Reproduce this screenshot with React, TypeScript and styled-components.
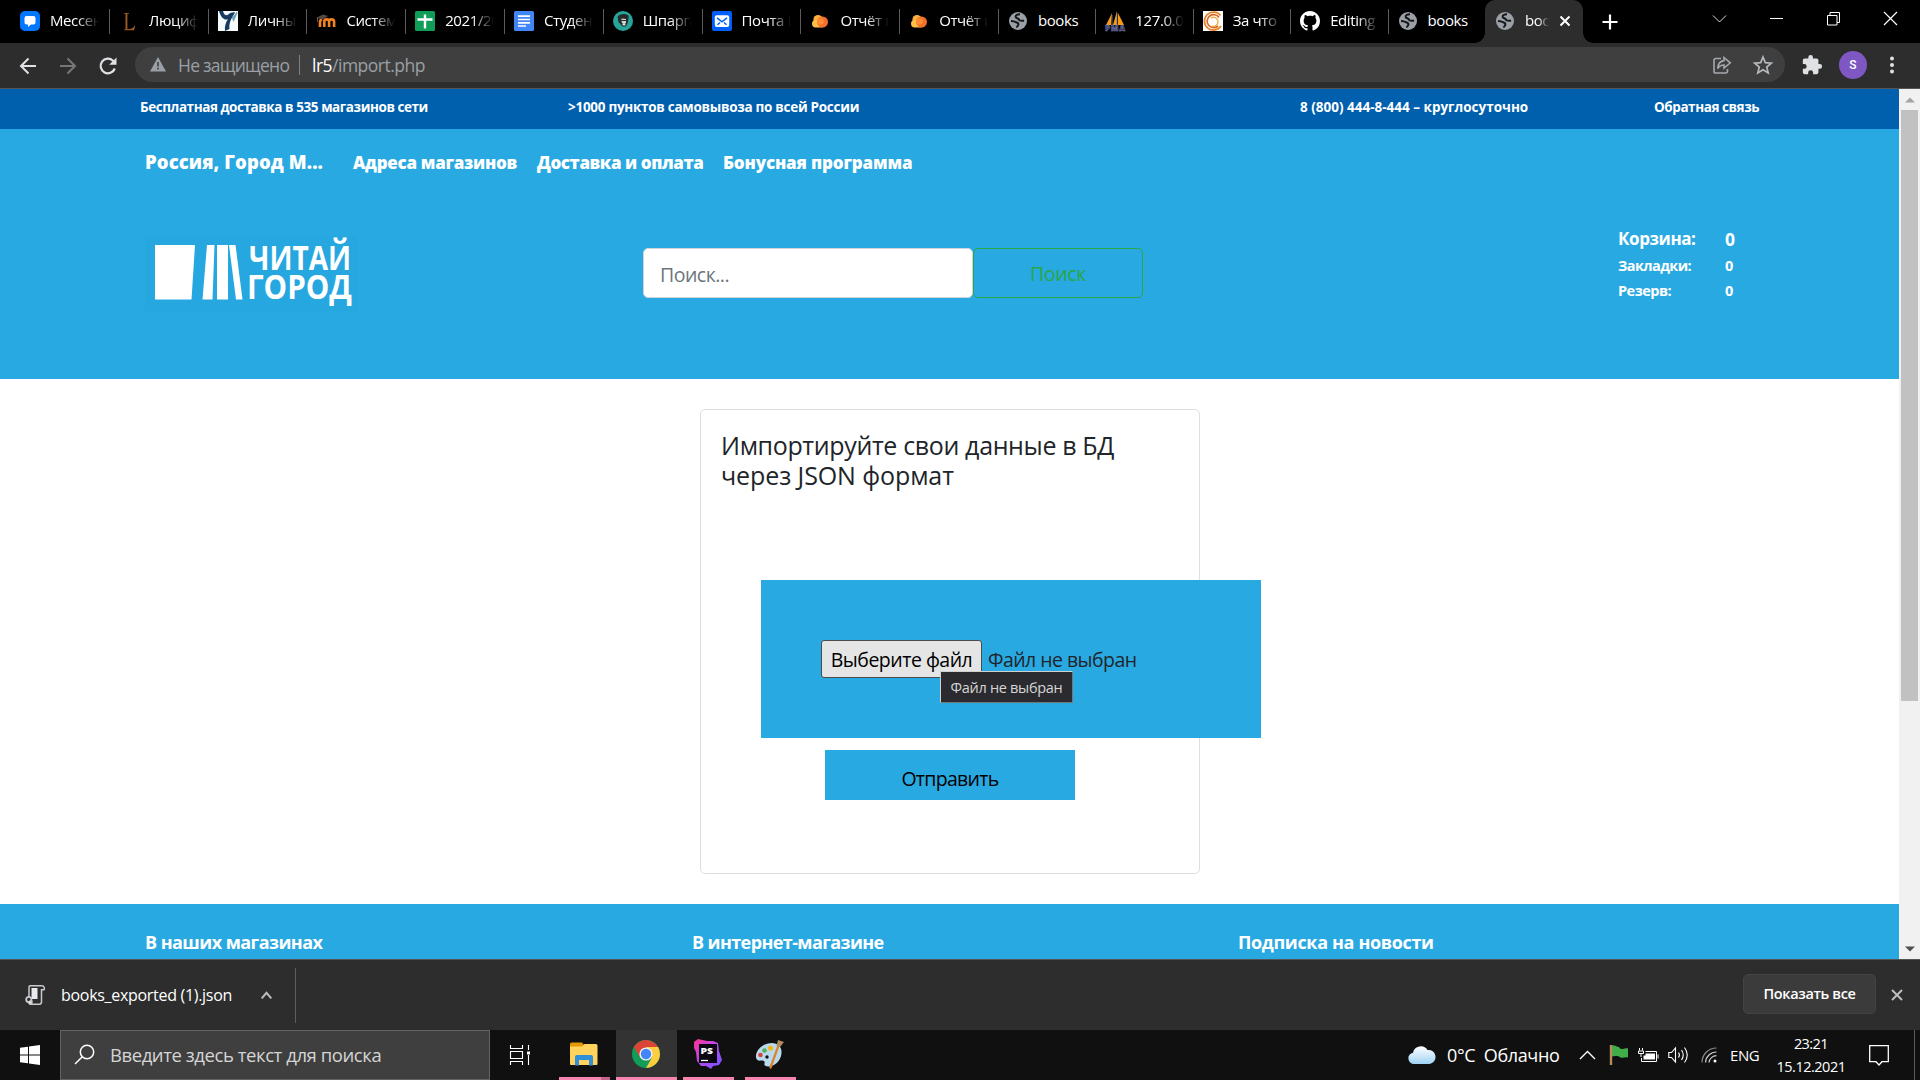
import React from "react";
import styled, { createGlobalStyle } from "styled-components";

const Global = createGlobalStyle`
  * { box-sizing: border-box; }
  html, body { margin: 0; padding: 0; overflow: hidden; }
  body { font-family: "Open Sans", "Noto Sans", sans-serif; background: #fff; }
  svg { display: block; flex: none; overflow: visible; }
`;

const Screen = styled.div`
  width: 1920px;
  height: 1080px;
  display: flex;
  flex-direction: column;
  overflow: hidden;
`;

const Label = styled.span<{ $size: number; $weight?: number; $spacing?: number; $color?: string }>`
  font-size: ${(p) => p.$size}px;
  font-weight: ${(p) => p.$weight ?? 400};
  letter-spacing: ${(p) => p.$spacing ?? 0}px;
  color: ${(p) => p.$color ?? "inherit"};
  white-space: pre;
`;

/* Browser tab strip */
const TabStrip = styled.div`
  height: 43px;
  background: #000;
  color: #fff;
  display: flex;
  padding-left: 10px;
`;
const Tab = styled.div<{ $active?: boolean; $line?: boolean; $width: number }>`
  width: ${(p) => p.$width}px;
  flex: none;
  height: 43px;
  display: flex;
  align-items: center;
  padding: 0 10px 1px;
  gap: 10px;
  position: relative;
  border-radius: ${(p) => (p.$active ? "10px 10px 0 0" : "0")};
  background: ${(p) => (p.$active ? "#2d2d2d" : "transparent")};
  &::after {
    content: "";
    display: ${(p) => (p.$line ? "block" : "none")};
    position: absolute;
    right: -1px;
    top: 9px;
    width: 1px;
    height: 25px;
    background: #5a5a5a;
  }
`;
const TabTitle = styled.div<{ $fade?: boolean; $width: number }>`
  width: ${(p) => p.$width}px;
  flex: none;
  overflow: hidden;
  font-size: 15px;
  line-height: 24px;
  padding-bottom: 3px;
  white-space: pre;
  letter-spacing: -0.4px;
  mask-image: ${(p) => (p.$fade ? "linear-gradient(90deg, #000 55%, transparent)" : "none")};
`;
const TabFoot = styled.i<{ $side: "left" | "right" }>`
  position: absolute;
  bottom: 0;
  ${(p) => p.$side}: -10px;
  width: 10px;
  height: 10px;
  background: radial-gradient(circle at ${(p) => (p.$side === "left" ? "0 0" : "100% 0")}, transparent 9.5px, #2d2d2d 10px);
`;
const NewTab = styled.div`
  padding: 14px 0 0 19px;
`;
const WindowButtons = styled.div`
  margin-left: auto;
  display: flex;
  padding: 11px 22px 0 0;
  gap: 42px;
`;

/* Address bar */
const Toolbar = styled.div`
  height: 46px;
  background: #2d2d2d;
  border-bottom: 1px solid #545454;
  display: flex;
  align-items: center;
  padding: 0 24px 0 18px;
`;
const NavButtons = styled.div`
  display: flex;
  width: 117px;
  gap: 20px;
`;
const Omnibox = styled.div`
  width: 1650px;
  height: 35px;
  margin-top: -2px;
  border-radius: 18px;
  background: #3f3f3f;
  display: flex;
  align-items: center;
  padding: 0 12px 0 15px;
  color: #9aa0a6;
`;
const Divider = styled.i<{ $height: number; $color: string }>`
  width: 1px;
  height: ${(p) => p.$height}px;
  background: ${(p) => p.$color};
`;
const Security = styled.div`
  width: 133px;
  padding-left: 12px;
`;
const Address = styled.div`
  padding-left: 12px;
`;
const OmniActions = styled.div`
  margin-left: auto;
  display: flex;
  gap: 21px;
`;
const ToolActions = styled.div`
  margin: -2px 0 0 auto;
  display: flex;
  align-items: center;
`;
const Avatar = styled.div`
  width: 28px;
  height: 28px;
  margin: 0 21px 0 16px;
  border-radius: 50%;
  background: #7e57c2;
  color: #fff;
  font: 500 12px/28px Roboto, sans-serif;
  text-align: center;
`;

/* Page */
const Viewport = styled.div`
  height: 870px;
  display: flex;
  overflow: hidden;
`;
const Page = styled.div`
  width: 1899px;
`;
const Scrollbar = styled.div`
  width: 21px;
  background: #f1f1f1;
  display: flex;
  flex-direction: column;
  align-items: center;
`;
const ScrollArrow = styled.div`
  height: 21px;
  padding-top: 8px;
`;
const Thumb = styled.div`
  width: 17px;
  height: 591px;
  background: #c1c1c1;
  margin-bottom: auto;
`;
const TopBar = styled.div`
  height: 40px;
  padding: 6px 0 0 140px;
  background: #0060ae;
  color: #fff;
  display: grid;
  grid-template-columns: 428px 732px 354px auto;
  line-height: 24px;
`;
const Header = styled.header`
  height: 250px;
  background: #29a9e2;
  color: #fff;
`;
const Menu = styled.nav`
  height: 107px;
  padding: 22px 0 0 145px;
  display: grid;
  grid-template-columns: 208px 184px 186px auto;
  line-height: 24px;
`;
const City = styled.div`
  margin-top: -1px;
`;
const Brand = styled.div`
  display: grid;
  grid-template-columns: 498px 975px auto;
  padding-left: 145px;
  align-items: start;
`;
const SearchForm = styled.form`
  display: flex;
  margin-top: 12px;
`;
const SearchField = styled.div`
  width: 330px;
  height: 50px;
  background: #fff;
  border: 1px solid #ced4da;
  border-radius: 5px;
  padding: 0 16px;
  line-height: 51px;
`;
const SearchButton = styled.button`
  width: 170px;
  height: 50px;
  padding: 0;
  background: transparent;
  border: 1px solid #28a745;
  border-radius: 5px;
  color: #28a745;
  font-family: inherit;
  line-height: 50px;
`;
const Counters = styled.div`
  margin-top: -11px;
`;
const Counter = styled.div<{ $height: number }>`
  display: grid;
  grid-template-columns: 107px auto;
  height: ${(p) => p.$height}px;
  line-height: ${(p) => p.$height}px;
`;
const Main = styled.main`
  height: 525px;
  padding: 30px 0 0 700px;
  background: #fff;
`;
const Card = styled.section`
  width: 500px;
  height: 465px;
  padding: 20px;
  border: 1px solid #dfdfdf;
  border-radius: 5px;
`;
const CardTitle = styled.h5`
  margin: 0 0 90px;
  font-size: 25px;
  font-weight: 500;
  line-height: 30px;
  color: #212529;
`;
const DropArea = styled.div`
  width: 500px;
  height: 158px;
  margin-left: 40px;
  padding: 60px;
  background: #29a9e2;
  color: #212529;
  display: flex;
  gap: 6px;
  position: relative;
  line-height: 39px;
`;
const FileButton = styled.button`
  width: 161px;
  height: 38px;
  padding: 0;
  background: #e5e5e5;
  border: 1px solid #4b4b4b;
  border-radius: 3px;
  font-family: inherit;
  line-height: 38px;
`;
const Tooltip = styled.div`
  position: absolute;
  left: 179px;
  top: 91px;
  width: 133px;
  height: 32px;
  background: #2b2b2f;
  border: 1px solid #767676;
  border-left-color: #d0d0d0;
  border-top-color: #d0d0d0;
  color: #d6d6d6;
  text-align: center;
  line-height: 30px;
`;
const Submit = styled.button`
  display: block;
  width: 250px;
  height: 50px;
  margin: 12px 0 0 104px;
  padding: 7px 0 0;
  border: 0;
  background: #29a9e2;
  font-family: inherit;
`;
const Footer = styled.footer`
  height: 55px;
  padding: 25px 0 0 145px;
  background: #29a9e2;
  color: #fff;
  display: grid;
  grid-template-columns: 547px 546px auto;
  line-height: 27px;
`;

/* Download shelf */
const Shelf = styled.div`
  height: 71px;
  background: #2d2d2d;
  border-top: 1px solid #545454;
  color: #fff;
  display: flex;
  align-items: center;
  padding: 0 17px 0 25px;
`;
const FileName = styled.div`
  width: 200px;
  margin-left: 16px;
`;
const ShelfCaret = styled.div`
  width: 34px;
`;
const ShowAll = styled.button`
  width: 133px;
  height: 40px;
  margin: -2px 15px 0 auto;
  padding: 0 0 1px;
  background: #3b3b3b;
  border: 1px solid #414346;
  border-radius: 5px;
  color: #fff;
  font-family: inherit;
`;

/* Taskbar */
const Taskbar = styled.div`
  height: 50px;
  background: #101010;
  color: #fff;
  display: flex;
`;
const Start = styled.div`
  width: 60px;
  padding: 15px 20px;
`;
const TaskSearch = styled.div`
  width: 430px;
  background: #3f3f3f;
  border: 1px solid #636363;
  color: #d5d5d5;
  display: flex;
  align-items: center;
  padding: 0 0 1px 13px;
  gap: 15px;
`;
const TaskView = styled.div`
  width: 69px;
  padding: 15px 20px;
`;
const TaskButton = styled.div<{ $width: number; $gap: number; $active?: boolean; $stack?: boolean }>`
  width: ${(p) => p.$width}px;
  margin-right: ${(p) => p.$gap}px;
  padding-right: 1px;
  background: ${(p) => (p.$active ? "#333" : "transparent")};
  border-bottom: 3px solid #f884b0;
  border-image: ${(p) => (p.$stack ? "linear-gradient(90deg, #f884b0 78%, #c4658c 78%) 3" : "none")};
  display: flex;
  justify-content: center;
  align-items: center;
`;
const Tray = styled.div`
  margin-left: auto;
  display: flex;
  align-items: center;
`;
const TrayItem = styled.div<{ $width: number; $inset?: number }>`
  width: ${(p) => p.$width}px;
  padding-left: ${(p) => p.$inset ?? 0}px;
  flex: none;
`;
const Clock = styled.div`
  width: 68px;
  display: flex;
  flex-direction: column;
  align-items: center;
  line-height: 23px;
`;
const ShowDesktop = styled.div`
  width: 6px;
  height: 50px;
  border-left: 1px solid #5c5c5c;
`;

const Globe = () => (
  <svg width="20" height="20" viewBox="0 0 20 20">
    <circle cx="10" cy="10" r="9" fill="#9aa0a6" />
    <path d="M12 3.200c-3 0-4.700 1.300-4.300 2.800.4 1.600 3 1 3.400 2.800.2 1.200 2.400.8 5 .9M3 10c2.300 0 3.700.3 5 1.300 1.600.300 2.500.8 2.400 2.200-.1 1.400-1.600 1.500-1.400 3.200" fill="none" stroke="#15171a" strokeWidth="2" />
  </svg>
);
const CloudMail = () => (
  <svg width="20" height="20" viewBox="0 0 20 20">
    <circle cx="8" cy="8.5" r="4.600" fill="#ffb13d" />
    <rect x="2" y="9" width="13" height="7.5" rx="3.7" fill="#ffc04a" />
    <circle cx="12.500" cy="11" r="5.500" fill="#f4702b" />
    <circle cx="10.500" cy="10.500" r="3.300" fill="#ff8d35" />
  </svg>
);

const favicons: Record<string, React.ReactNode> = {
  messenger: (
    <svg width="20" height="20" viewBox="0 0 20 20">
      <rect width="20" height="20" rx="5" fill="#0077ff" />
      <path d="M6.500 5h7a2 2 0 0 1 2 2v4.500a2 2 0 0 1-2 2H11L8 16v-2.500H6.500a2 2 0 0 1-2-2V7a2 2 0 0 1 2-2z" fill="#fff" />
    </svg>
  ),
  lucifer: (
    <svg width="20" height="20" viewBox="0 0 20 20">
      <path d="M5 2h5v.8H8.400v15.200c3 .3 5.800-.4 7.200-3.500l.6.100-1.100 4.600H5v-.8h1.500V2.800H5z" fill="#9c5a22" />
    </svg>
  ),
  cabinet: (
    <svg width="20" height="20" viewBox="0 0 20 20">
      <rect width="20" height="20" fill="#f4fbfa" />
      <path d="M1 0h4c1 4 3 5.500 6 3 1.500-1 3-2 6-1.500l-4 7c-1.500 3-2 7-1.500 9.500L7 20c-.5-5 .5-8 3-12C7 10 3 7 1 0z" fill="#173a63" />
      <path d="M14 7l5-6.500.5 1.500-4 9z" fill="#6aa0b4" />
    </svg>
  ),
  moodle: (
    <svg width="20" height="20" viewBox="0 0 20 20">
      <path d="M4 16v-5a2.700 2.700 0 0 1 2-2.500M8.300 16v-5.200c0-3.200 4.800-3.200 4.800 0V16m0-5.200c0-3.200 5-3.200 5 0V16" fill="none" stroke="#f58220" strokeWidth="2.600" />
      <path d="M0 7l7-3.500L12 5 7 8.500z" fill="#54483f" />
      <path d="M1.500 7v4" stroke="#6b5b50" />
    </svg>
  ),
  sheets: (
    <svg width="20" height="20" viewBox="0 0 20 20">
      <rect width="20" height="20" rx="1.500" fill="#0f9d58" />
      <path d="M10 3.500v14M2.500 8.500h15" stroke="#fff" strokeWidth="2.400" />
    </svg>
  ),
  docs: (
    <svg width="20" height="20" viewBox="0 0 20 20">
      <rect width="20" height="20" rx="1.500" fill="#4285f4" />
      <path d="M4 5.200h12M4 8.500h12M4 11.800h12M4 15h8" stroke="#fff" strokeWidth="1.700" />
    </svg>
  ),
  crib: (
    <svg width="20" height="20" viewBox="0 0 20 20">
      <circle cx="10" cy="10" r="10" fill="#26a69a" />
      <path d="M4.500 6c1-3.500 9-4 11-1.500.5 3-.5 4-.5 6.500l-2 4.500H9.500L5.500 11z" fill="#262c2e" />
      <path d="M8.500 7.500l4.500.5v4l-2 1.500-2.300-2z" fill="#cfd6d3" />
      <path d="M8.500 9.500h5" stroke="#262c2e" />
      <path d="M9.500 13.500l3 .3" stroke="#e8e8e8" strokeWidth="1.300" />
    </svg>
  ),
  mail: (
    <svg width="20" height="20" viewBox="0 0 20 20">
      <rect width="20" height="20" rx="2" fill="#005ff9" />
      <rect x="2.800" y="4.300" width="14.400" height="11.700" rx="2" fill="#fff" />
      <path d="M5 6.800l5 4 5-4M5.500 13.800L8 11.500m6.500 2.300L12 11.500" fill="none" stroke="#005ff9" strokeWidth="1.500" />
    </svg>
  ),
  cloud: <CloudMail />,
  globe: <Globe />,
  pma: (
    <svg width="20" height="20" viewBox="0 0 20 20">
      <path d="M7 2L1 14h5zM12 0L8 14h4zM13 2v12h6z" fill="#f89c0e" />
      <path d="M7 4v10M12 2v12" stroke="#6c78af" strokeWidth=".8" />
      <text x="0" y="20" fontSize="8" fontWeight="800" fill="#33365e" stroke="#8f93c5" strokeWidth=".4" textLength="20">PMA</text>
    </svg>
  ),
  swirl: (
    <svg width="20" height="20" viewBox="0 0 20 20">
      <rect width="20" height="20" fill="#fff" />
      <path d="M17.500 4.500A9 9 0 1 0 18 15" fill="none" stroke="#e8862e" strokeWidth="1.800" />
      <path d="M16 6.500A6.500 6.500 0 1 0 15 15" fill="none" stroke="#d8672a" strokeWidth="1.700" />
      <path d="M8 7a4.500 4.500 0 1 1 1 8" fill="none" stroke="#f0b04a" strokeWidth="1.500" />
    </svg>
  ),
  github: (
    <svg width="20" height="20" viewBox="0 0 16 16">
      <path fill="#fff" d="M8 0C3.580 0 0 3.580 0 8c0 3.540 2.290 6.530 5.470 7.590.4.070.55-.17.55-.38 0-.19-.01-.82-.01-1.490-2.010.37-2.530-.49-2.690-.94-.09-.23-.48-.94-.82-1.130-.28-.15-.68-.52-.01-.53.63-.01 1.080.58 1.230.82.72 1.210 1.870.87 2.330.66.07-.52.28-.87.51-1.070-1.780-.2-3.640-.89-3.640-3.950 0-.87.31-1.590.82-2.150-.08-.2-.36-1.020.08-2.120 0 0 .67-.21 2.200.82.64-.18 1.320-.27 2-.27s1.360.09 2 .27c1.530-1.040 2.200-.82 2.200-.82.44 1.100.16 1.920.08 2.120.51.56.82 1.270.82 2.150 0 3.070-1.870 3.750-3.650 3.950.29.25.54.73.54 1.480 0 1.070-.01 1.930-.01 2.200 0 .21.15.46.55.38A8.010 8.010 0 0 0 16 8c0-4.420-3.580-8-8-8z" />
    </svg>
  ),
};

const tabs: { icon: string; title: string; fade?: boolean }[] = [
  { icon: "messenger", title: "Мессен", fade: true },
  { icon: "lucifer", title: "Люциф", fade: true },
  { icon: "cabinet", title: "Личный", fade: true },
  { icon: "moodle", title: "Систем", fade: true },
  { icon: "sheets", title: "2021/20", fade: true },
  { icon: "docs", title: "Студен", fade: true },
  { icon: "crib", title: "Шпарга", fade: true },
  { icon: "mail", title: "Почта I", fade: true },
  { icon: "cloud", title: "Отчёт г", fade: true },
  { icon: "cloud", title: "Отчёт г", fade: true },
  { icon: "globe", title: "books" },
  { icon: "pma", title: "127.0.0", fade: true },
  { icon: "swirl", title: "За что", fade: true },
  { icon: "github", title: "Editing", fade: true },
  { icon: "globe", title: "books" },
];

const Logo = () => (
  <svg width="212" height="75" viewBox="0 0 212 75" fill="#fff">
    <rect width="212" height="75" fill="#27a7e0" />
    <path d="M10 9h40l-3.500 54.500H10zM62 9h7.500l-2 54.500H57.500zM72 9h11v54.500H72zM84 9h6.500l7 54.500H91z" />
    <text x="104" y="34" fontSize="34" fontWeight="700" textLength="102" lengthAdjust="spacingAndGlyphs">ЧИТАЙ</text>
    <text x="102" y="63" fontSize="34" fontWeight="700" textLength="105" lengthAdjust="spacingAndGlyphs">ГОРОД</text>
  </svg>
);

export default function App() {
  return (
    <Screen>
      <Global />
      <TabStrip>
        {tabs.map((tab, i) => (
          <Tab key={i} $width={i < 10 ? 98.8 : 97.4} $line={i < tabs.length - 1}>
            {favicons[tab.icon]}
            <TabTitle $fade={tab.fade} $width={49}>{tab.title}</TabTitle>
          </Tab>
        ))}
        <Tab $active $width={98.4}>
          <TabFoot $side="left" />
          <Globe />
          <TabTitle $fade $width={24}>boo</TabTitle>
          <svg width="12" height="12" viewBox="0 0 12 12"><path d="M1.500 1.500l9 9m0-9l-9 9" stroke="#fff" strokeWidth="2" /></svg>
          <TabFoot $side="right" />
        </Tab>
        <NewTab>
          <svg width="16" height="16" viewBox="0 0 16 16"><path d="M8 .5v15M.5 8h15" stroke="#fff" strokeWidth="2.200" /></svg>
        </NewTab>
        <WindowButtons>
          <svg width="15" height="15" viewBox="0 0 15 15"><path d="M1 4.500l6.500 6.500L14 4.500" fill="none" stroke="#ddd" /></svg>
          <svg width="15" height="15" viewBox="0 0 15 15"><path d="M1 7.500h13" stroke="#fff" /></svg>
          <svg width="15" height="15" viewBox="0 0 15 15"><path d="M1.500 4.500h9.500v9.500H1.500zM4 4.500V1.500h9.500V11.500H11" fill="none" stroke="#fff" /></svg>
          <svg width="15" height="15" viewBox="0 0 15 15"><path d="M1 1l13 13M14 1L1 14" stroke="#fff" strokeWidth="1.200" /></svg>
        </WindowButtons>
      </TabStrip>

      <Toolbar>
        <NavButtons>
          <svg width="20" height="20" viewBox="0 0 20 20"><path d="M18 10H3m7.500-7.500L3 10l7.500 7.500" fill="none" stroke="#dfe1e5" strokeWidth="2" /></svg>
          <svg width="20" height="20" viewBox="0 0 20 20"><path d="M2 10h15M9.500 2.500L17 10l-7.500 7.500" fill="none" stroke="#777" strokeWidth="2" /></svg>
          <svg width="20" height="20" viewBox="0 0 20 20"><path d="M16.800 12.500A7.300 7.300 0 1 1 15 4.700l2 2" fill="none" stroke="#dfe1e5" strokeWidth="2.200" /><path d="M18.500 1.500v7.300h-7.300z" fill="#dfe1e5" /></svg>
        </NavButtons>
        <Omnibox>
          <svg width="16" height="15" viewBox="0 0 16 15"><path d="M8 0l8 14.500H0z" fill="#9aa0a6" /><path d="M8 5v4.500M8 10.800v1.700" stroke="#3f3f3f" strokeWidth="1.600" /></svg>
          <Security><Label $size={17.5} $spacing={-0.75}>Не защищено</Label></Security>
          <Divider $height={20} $color="#7d8084" />
          <Address><Label $size={17.5} $spacing={-0.5}><Label $size={17.5} $spacing={-0.5} $color="#fff">lr5</Label>/import.php</Label></Address>
          <OmniActions>
            <svg width="20" height="20" viewBox="0 0 20 20" fill="none" stroke="#a5a8ac" strokeWidth="1.600"><path d="M9 3.500H3.800A1.800 1.800 0 0 0 2 5.300v10.900A1.800 1.800 0 0 0 3.800 18h9.900a1.800 1.800 0 0 0 1.800-1.800V14" /><path d="M12 2.500l6.300 5.300L12 13v-3c-3 0-4.800 1-6.300 3.600C6 9 8 6 12 5.600z" /></svg>
            <svg width="20" height="20" viewBox="0 0 20 20" fill="none" stroke="#b5b8bc" strokeWidth="1.700"><path d="M10 2l2.300 5.600 6 .5-4.600 3.900 1.500 5.900-5.200-3.200-5.200 3.200 1.500-5.900L1.700 8.100l6-.5z" /></svg>
          </OmniActions>
        </Omnibox>
        <ToolActions>
          <svg width="22" height="22" viewBox="0 0 24 24"><path fill="#dfe1e5" d="M20.500 11H19V7c0-1.100-.9-2-2-2h-4V3.500a2.500 2.500 0 0 0-5 0V5H4c-1.100 0-2 .9-2 2v3.800h1.500a2.700 2.700 0 0 1 0 5.400H2V20c0 1.100.9 2 2 2h3.800v-1.500a2.700 2.700 0 0 1 5.400 0V22H17c1.100 0 2-.9 2-2v-4h1.500a2.500 2.500 0 0 0 0-5z" /></svg>
          <Avatar>S</Avatar>
          <svg width="8" height="18" viewBox="0 0 8 18" fill="#dfe1e5"><circle cx="4" cy="2.500" r="2" /><circle cx="4" cy="9" r="2" /><circle cx="4" cy="15.500" r="2" /></svg>
        </ToolActions>
      </Toolbar>

      <Viewport>
        <Page>
          <TopBar>
            <Label $size={13.5} $weight={700} $spacing={-0.43}>Бесплатная доставка в 535 магазинов сети</Label>
            <Label $size={13.5} $weight={700} $spacing={-0.28}>&gt;1000 пунктов самовывоза по всей России</Label>
            <Label $size={13.5} $weight={700}>8 (800) 444-8-444 – круглосуточно</Label>
            <Label $size={13.5} $weight={700} $spacing={-0.43}>Обратная связь</Label>
          </TopBar>
          <Header>
            <Menu>
              <City><Label $size={18.5} $weight={800} $spacing={0.1}>Россия, Город М...</Label></City>
              <Label $size={17} $weight={800} $spacing={-0.28}>Адреса магазинов</Label>
              <Label $size={17} $weight={800} $spacing={-0.42}>Доставка и оплата</Label>
              <Label $size={17} $weight={800} $spacing={-0.15}>Бонусная программа</Label>
            </Menu>
            <Brand>
              <Logo />
              <SearchForm>
                <SearchField><Label $size={19.5} $spacing={-0.5} $color="#6c757d">Поиск...</Label></SearchField>
                <SearchButton type="button"><Label $size={19.5} $spacing={-0.3}>Поиск</Label></SearchButton>
              </SearchForm>
              <Counters>
                <Counter $height={28}><Label $size={17} $weight={700} $spacing={-0.4}>Корзина:</Label><Label $size={17.5} $weight={700}>0</Label></Counter>
                <Counter $height={25}><Label $size={14.5} $weight={700} $spacing={-0.6}>Закладки:</Label><Label $size={14.5} $weight={700}>0</Label></Counter>
                <Counter $height={25}><Label $size={14.5} $weight={700} $spacing={-0.5}>Резерв:</Label><Label $size={14.5} $weight={700}>0</Label></Counter>
              </Counters>
            </Brand>
          </Header>
          <Main>
            <Card>
              <CardTitle>
                <Label $size={25} $weight={500} $spacing={-0.36}>Импортируйте свои данные в БД</Label>
                <br />
                <Label $size={25} $weight={500} $spacing={-0.1}>через JSON формат</Label>
              </CardTitle>
              <DropArea>
                <FileButton type="button"><Label $size={19.5} $spacing={-0.5}>Выберите файл</Label></FileButton>
                <Label $size={19.5} $spacing={-0.55}>Файл не выбран</Label>
                <Tooltip><Label $size={14.5} $spacing={-0.3}>Файл не выбран</Label></Tooltip>
              </DropArea>
              <Submit type="button"><Label $size={19.5} $spacing={-0.7}>Отправить</Label></Submit>
            </Card>
          </Main>
          <Footer>
            <Label $size={18} $weight={700} $spacing={-0.55}>В наших магазинах</Label>
            <Label $size={18} $weight={700} $spacing={-0.6}>В интернет-магазине</Label>
            <Label $size={18} $weight={700} $spacing={-0.35}>Подписка на новости</Label>
          </Footer>
        </Page>
        <Scrollbar>
          <ScrollArrow><svg width="10" height="6" viewBox="0 0 10 6"><path d="M0 5.500h10L5 .5z" fill="#a3a3a3" /></svg></ScrollArrow>
          <Thumb />
          <ScrollArrow><svg width="10" height="6" viewBox="0 0 10 6"><path d="M0 .5h10L5 5.500z" fill="#505050" /></svg></ScrollArrow>
        </Scrollbar>
      </Viewport>

      <Shelf>
        <svg width="20" height="20" viewBox="0 0 20 20" fill="#e9e9ee" stroke="#c9c9cf">
          <path d="M5 .8h12c2 0 3 2.500 2 4h-2.500v12c0 2-1 2.400-2 2.400H6c1-.7 1.200-1.500 1-3L4 12V3c0-1.500.5-2.200 1-2.200z" fill="#2d2d2d" strokeWidth="1.500" />
          <path d="M6.500 3h6v11h-6z" stroke="none" />
          <circle cx="3.800" cy="14.500" r="2.600" fill="#2d2d2d" strokeWidth="1.800" />
          <circle cx="5" cy="17.500" r="1.600" />
        </svg>
        <FileName><Label $size={16} $spacing={-0.3}>books_exported (1).json</Label></FileName>
        <ShelfCaret><svg width="11" height="8" viewBox="0 0 11 8"><path d="M.7 7.300l4.800-5.500 4.800 5.500" fill="none" stroke="#bdbdbd" strokeWidth="2" /></svg></ShelfCaret>
        <Divider $height={55} $color="#5e5e5e" />
        <ShowAll type="button"><Label $size={14.5} $weight={600} $spacing={-0.35}>Показать все</Label></ShowAll>
        <svg width="12" height="12" viewBox="0 0 12 12"><path d="M1 1l10 10m0-10L1 11" stroke="#bdbdbd" strokeWidth="2" /></svg>
      </Shelf>

      <Taskbar>
        <Start>
          <svg width="20" height="20" viewBox="0 0 20 20" fill="#fff"><path d="M0 2.800l8-1.100v7.800H0zM9 1.500L20 0v9.500H9zM0 10.500h8v7.800l-8-1.100zM9 10.500h11V20L9 18.500z" /></svg>
        </Start>
        <TaskSearch>
          <svg width="21" height="21" viewBox="0 0 21 21" fill="none" stroke="#fff" strokeWidth="1.500"><circle cx="13" cy="8" r="6.700" /><path d="M8.300 12.800L1 20" /></svg>
          <Label $size={18.5} $spacing={-0.43}>Введите здесь текст для поиска</Label>
        </TaskSearch>
        <TaskView>
          <svg width="20" height="20" viewBox="0 0 20 20" fill="none" stroke="#fff"><path d="M.5 0v4M12.500 0v4M.5 3.500h12M.5 6.500h12v7H.5zM.5 20v-3.500h12V20M18.500 0v5M18.500 10v10" strokeWidth="1.100" /><path d="M17 6.500h3v3h-3z" fill="#fff" stroke="none" /></svg>
        </TaskView>
        <TaskButton $width={51} $gap={6} $stack>
          <svg width="28" height="24" viewBox="0 0 28 24">
            <path d="M0 2a1.500 1.500 0 0 1 1.500-1.500H12l2 2.500v3H0z" fill="#e29a00" />
            <path d="M0 4.500h12L14.500 2H26a1.500 1.500 0 0 1 1.500 1.500V22a1 1 0 0 1-1 1H1a1 1 0 0 1-1-1z" fill="#ffd35c" />
            <path d="M5 23.500V15a2 2 0 0 1 2-2h14a2 2 0 0 1 2 2v8.500h-4V18H9v5.500z" fill="#2f8fd8" />
          </svg>
        </TaskButton>
        <TaskButton $width={61} $gap={6} $active>
          <svg width="28" height="28" viewBox="0 0 28 28">
            <circle cx="14" cy="14" r="14" fill="#0f9d58" />
            <path d="M14 7h12.100A14 14 0 0 1 14 28l6-10.500z" fill="#ffcd40" />
            <path d="M8 17.500L1.900 7A14 14 0 0 1 26.100 7H14z" fill="#db4437" />
            <circle cx="14" cy="14" r="6.600" fill="#f1f1f1" />
            <circle cx="14" cy="14" r="5.200" fill="#4285f4" />
          </svg>
        </TaskButton>
        <TaskButton $width={51} $gap={11}>
          <svg width="30" height="30" viewBox="0 0 30 30">
            <defs><linearGradient id="ps" x1="0" y1="0" x2="1" y2="1"><stop offset="0" stopColor="#ff318c" /><stop offset=".5" stopColor="#b74af7" /><stop offset="1" stopColor="#6b57ff" /></linearGradient></defs>
            <path d="M1 3l4-3 9 2 6 0 5 2 1 8 3 9-3 5-6 1-2 3-5-3-5 0-4-5-1-9-2-4z" fill="url(#ps)" />
            <rect x="6" y="5" width="18" height="19" fill="#0a0612" />
            <text x="7.500" y="15" fontSize="9.500" fontWeight="800" fill="#fff" textLength="12.500" lengthAdjust="spacingAndGlyphs">PS</text>
            <path d="M8 21.500h7" stroke="#fff" strokeWidth="1.300" />
          </svg>
        </TaskButton>
        <TaskButton $width={51} $gap={0}>
          <svg width="30" height="30" viewBox="0 0 30 30">
            <path d="M13 4.500c8-2 14 2 13.500 9.500-.5 8-7 13.500-13 13.500-3.500 0-4.500-1-4-3s-.5-3.500-3-3-5 0-5.500-3C.3 12 6 6 13 4.500z" fill="#b9d9ec" />
            <circle cx="5.500" cy="16" r="2.300" fill="#d9433c" /><circle cx="9.500" cy="11.500" r="2.300" fill="#55b04e" /><circle cx="15.500" cy="9" r="2.600" fill="#f6b51e" />
            <circle cx="12" cy="18" r="1.700" fill="#101010" />
            <path d="M15.500 28.500L23 8" stroke="#d98532" strokeWidth="2.300" strokeLinecap="round" />
            <path d="M21.500 7L23 1l6 2-4 5z" fill="#b58a5c" />
          </svg>
        </TaskButton>
        <Tray>
          <TrayItem $width={39}>
            <svg width="27" height="20" viewBox="0 0 27 20"><defs><linearGradient id="cl" x1="0" y1="0" x2="0" y2="1"><stop offset="0" stopColor="#fff" /><stop offset="1" stopColor="#9fd2f5" /></linearGradient></defs><path d="M6 19a5.700 5.700 0 0 1-1-11.300A8 8 0 0 1 19.500 5a6.500 6.500 0 0 1 2 14z" fill="url(#cl)" /></svg>
          </TrayItem>
          <TrayItem $width={132}><Label $size={18} $spacing={-0.37}>0°C  Облачно</Label></TrayItem>
          <TrayItem $width={30}><svg width="17" height="10" viewBox="0 0 17 10"><path d="M1 9l7.500-7.500L16 9" fill="none" stroke="#fff" strokeWidth="1.400" /></svg></TrayItem>
          <TrayItem $width={29}><svg width="20" height="20" viewBox="0 0 20 20"><path d="M1 1c4-2 6 1 9 1 1 2 2 2 4 2 2-.5 3-1 5-.5v9c-3-1-6 2-9-1-3-1-6 0-9 0z" fill="#3fae49" /><path d="M2 0v20" stroke="#b98b5b" strokeWidth="2.400" /></svg></TrayItem>
          <TrayItem $width={30}><svg width="21" height="14" viewBox="0 0 21 14"><path d="M7.500 5.500h9.500v6H5.500V7.500h2z" fill="#fff" /><path d="M7.500 3.500h11v10h-15V10M20 6.500v4M1.500 0v2.500M4.500 0v2.500M.5 3h5v2.500H.5zM3 5.500v3.500" fill="none" stroke="#fff" /></svg></TrayItem>
          <TrayItem $width={33}><svg width="21" height="18" viewBox="0 0 21 18" fill="none" stroke="#fff" strokeWidth="1.100"><path d="M.8 6.500h2.700L7.500 2v14l-4-4.500H.8z" /><path d="M10.500 6.500q1.800 2.500 0 5M13.500 4q3.500 5 0 10M16.500 1.500q5.500 7.500 0 15" /></svg></TrayItem>
          <TrayItem $width={29}><svg width="17" height="16" viewBox="0 0 17 16" fill="none" stroke="#8d8d8d" strokeWidth="1.200"><path d="M1 15.500A14.500 14.500 0 0 1 15.500 1" /><path d="M4.500 15.500A11 11 0 0 1 15.500 5M8 15.500a7.500 7.500 0 0 1 7.500-6.800" stroke="#c9c9c9" /><circle cx="14" cy="14" r="1.500" fill="#fff" stroke="none" /></svg></TrayItem>
          <TrayItem $width={47}><Label $size={15} $spacing={-0.4}>ENG</Label></TrayItem>
          <Clock>
            <Label $size={14.5} $spacing={-0.55}>23:21</Label>
            <Label $size={14.5} $spacing={-0.5}>15.12.2021</Label>
          </Clock>
          <TrayItem $width={69} $inset={24}><svg width="20" height="20" viewBox="0 0 20 20"><path d="M.7.700h18.600v16H13L10 20l-3-3.300H.7z" fill="none" stroke="#fff" strokeWidth="1.300" /></svg></TrayItem>
          <ShowDesktop />
        </Tray>
      </Taskbar>
    </Screen>
  );
}
